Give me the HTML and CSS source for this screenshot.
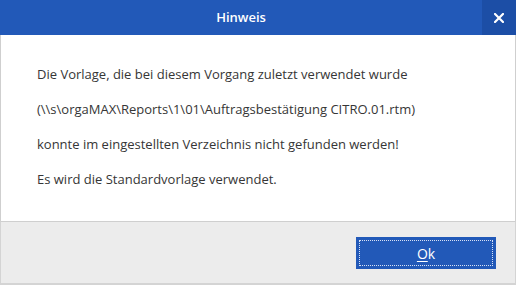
FILE: index.html
```html
<!DOCTYPE html>
<html>
<head>
<meta charset="utf-8">
<link rel="stylesheet" href="styles.css">
</head>
<body>
<div class="dialog">
  <div class="titlebar">
    <div class="title">Hinweis</div>
    <div class="close">
      <svg width="10" height="10" viewBox="0 0 10 10"><path d="M1 1L9 9M9 1L1 9" stroke="#fff" stroke-width="2.2" stroke-linecap="square"/></svg>
    </div>
  </div>
  <div class="content">
    <p>Die Vorlage, die bei diesem Vorgang zuletzt verwendet wurde</p>
    <p>(\\s\orgaMAX\Reports\1\01\Auftragsbestätigung CITRO.01.rtm)</p>
    <p>konnte im eingestellten Verzeichnis nicht gefunden werden!</p>
    <p>Es wird die Standardvorlage verwendet.</p>
  </div>
  <div class="footer">
    <button class="ok"><span class="focus"><u>O</u>k</span></button>
  </div>
</div>
</body>
</html>
```
FILE: styles.css
```css
html, body {
  margin: 0;
  padding: 0;
  background: #ffffff;
}
body {
  width: 516px;
  height: 285px;
  overflow: hidden;
  font-family: "Open Sans", "Noto Sans", sans-serif;
}
.dialog {
  width: 516px;
  height: 285px;
  display: flex;
  flex-direction: column;
}
.titlebar {
  height: 35px;
  background: #2259b8;
  display: flex;
  align-items: stretch;
  flex: none;
}
.title {
  flex: 1;
  text-align: center;
  color: #ffffff;
  font-size: 13px;
  font-weight: 600;
  line-height: 35px;
}
.close {
  width: 34px;
  background: #1c4ea6;
  display: flex;
  align-items: center;
  justify-content: center;
}
.content {
  flex: 1;
  border-left: 1px solid #cfcfcf;
  border-right: 1px solid #cfcfcf;
  padding: 22px 0 0 36px;
  color: #363636;
  font-size: 13px;
}
.content p {
  margin: 0;
  height: 35px;
  line-height: 35px;
}
.footer {
  height: 64px;
  flex: none;
  background: #ececec;
  border-top: 1px solid #cfcfcf;
  border-left: 1px solid #d4d4d4;
  border-right: 1px solid #d4d4d4;
  border-bottom: 2px solid #d4d4d4;
  box-sizing: border-box;
  display: flex;
  justify-content: flex-end;
  align-items: flex-start;
  padding: 15px 19px 0 0;
}
.ok {
  width: 140px;
  height: 32px;
  background: #2259b8;
  border: none;
  padding: 3px;
  margin: 0;
  font-family: inherit;
  color: #ffffff;
  font-size: 14px;
  display: flex;
}
.focus {
  flex: 1;
  border: 1px dotted #d8e2f5;
  display: flex;
  align-items: center;
  justify-content: center;
}
.focus u {
  text-decoration-thickness: 1px;
  text-underline-offset: 2px;
}
```
